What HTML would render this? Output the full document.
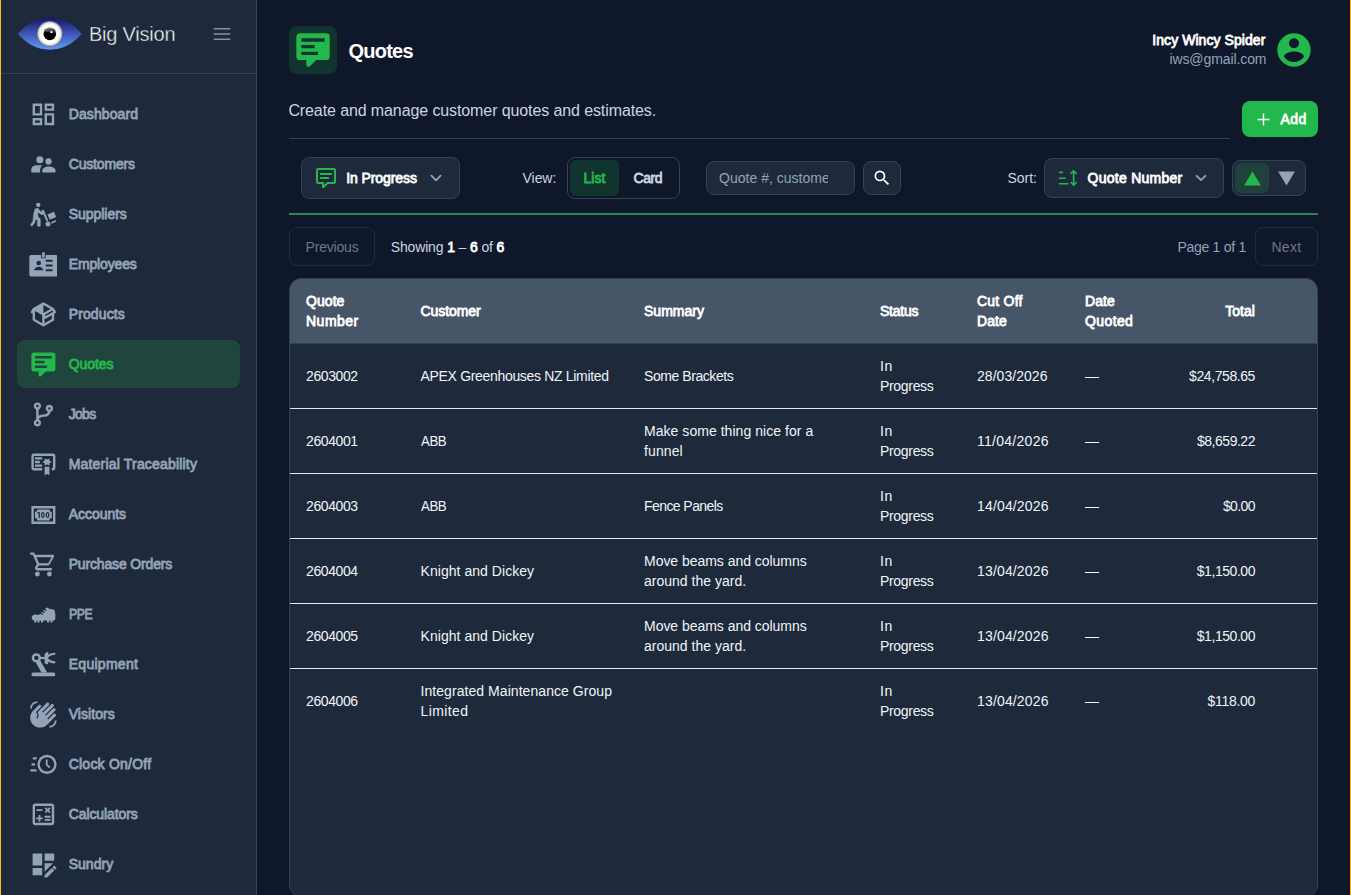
<!DOCTYPE html>
<html lang="en">
<head>
<meta charset="utf-8">
<title>Quotes - Big Vision</title>
<style>
*{box-sizing:border-box}
html,body{margin:0;padding:0}
body{width:1351px;height:895px;overflow:hidden;background:#0f172a;color:#f1f5f9;font-family:"Liberation Sans",sans-serif;font-size:14px;line-height:20px;position:relative}
.edge{position:absolute;top:0;width:1px;height:895px;background:#fbbd0e;z-index:9}
.ic{display:block;flex:none}
span{white-space:pre}
aside{position:absolute;left:1px;top:0;width:256px;height:895px;background:#1e293b;border-right:1px solid #334155}
.brand{position:absolute;left:0;top:0;width:255px;height:74px;border-bottom:1px solid #334155}
.brand .logo{position:absolute;left:15.5px;top:17.1px}
.brand .name{position:absolute;left:88px;top:19.9px;font-size:20px;line-height:28px;color:#f8fafc;-webkit-text-stroke:.4px #1e293b}
.brand .burger{position:absolute;left:209px;top:22px;color:#8493aa}
nav{position:absolute;left:0;top:0;width:255px}
.nav-item{position:absolute;left:16px;width:223px;height:48px;border-radius:8px;color:#94a3b8;display:block;text-decoration:none}
.nav-item .ic{position:absolute;left:11.6px;top:9.6px}
.nav-label{position:absolute;left:51.7px;top:14px;line-height:20px}
.nav-item.active{background:#20453d;color:#23b84b}
main{position:absolute;left:257px;top:0;width:1093px;height:895px}
.abs{position:absolute}
.pagehead .iconbox{position:absolute;left:32px;top:26px;width:48px;height:48px;border-radius:8px;background:#12342f;color:#23b84b;display:flex;align-items:center;justify-content:center}
h1{position:absolute;left:91.4px;top:37px;margin:0;font-size:20px;line-height:28px;font-weight:bold;color:#fff}
.user{position:absolute;right:83.6px;top:30.3px;text-align:right}
.user .nm{display:block;color:#fff;line-height:20px;height:19.2px;position:relative;left:-1px}
.user .em{display:block;color:#94a3b8;line-height:20px}
.avatar{position:absolute;left:1017px;top:30px;color:#23b84b}
.sub{position:absolute;left:31.4px;top:98.6px;margin:0;font-size:16px;line-height:24px;color:#cbd5e1}
.hr{position:absolute;left:32px;top:138px;width:941px;height:1px;background:#334155}
.addbtn{position:absolute;left:985px;top:101px;width:76px;height:36px;border-radius:8px;background:#23b84b;color:#fff;font-weight:bold;border:0;padding:0;font:inherit}
.addbtn svg{position:absolute;left:14.5px;top:11.5px}
.addbtn span{position:absolute;left:38.4px;top:7.7px;line-height:20px}
.box{position:absolute;border:1px solid #334155;border-radius:8px;background:#1e293b}
.lbl{position:absolute;color:#cbd5e1;line-height:20px}
.b{font-weight:normal}
.showing b{color:#fff;font-weight:normal;-webkit-text-stroke:.8px}
.greenline{position:absolute;left:32px;top:213px;width:1029px;height:2px;background:#2e8553}
.pill{position:absolute;border-radius:6px}
.pgbtn{position:absolute;border:1px solid #212c40;border-radius:8px;color:#6e7788;background:transparent;height:39px;top:227px;line-height:20px}
.pgbtn > span{position:absolute;top:8.6px}
.card{position:absolute;left:32px;top:278px;width:1029px;height:619px;border:1px solid #334155;border-radius:12px;background:#1e293b;overflow:hidden}
table{border-collapse:separate;border-spacing:0;table-layout:fixed;width:1027px}
th,td{padding:0 0 0 16px;text-align:left;vertical-align:middle;line-height:20px;font-weight:normal}
th{height:65px;background:#475569;color:#fff;border-bottom:1px solid #334155}
td{height:65px;border-top:1px solid #e5e7eb;color:#f1f5f9}
tbody tr:first-child td{height:64px;border-top:0}
th.r,td.r{text-align:right;padding:0 16px 0 0}
</style>
</head>
<body>
<div class="edge" style="left:0"></div><div class="edge" style="left:1350px"></div>
<aside>
  <div class="brand">
    <svg class="logo" width="65.6" height="33.7" viewBox="0 0 66 34" preserveAspectRatio="none" aria-hidden="true">
      <defs>
        <linearGradient id="lid" x1="0" y1="0" x2="0" y2="1"><stop offset="0" stop-color="#17176e"/><stop offset=".45" stop-color="#3b4fb0"/><stop offset="1" stop-color="#5f9bf5"/></linearGradient>
        <radialGradient id="ball" cx=".5" cy=".5" r=".5"><stop offset="0" stop-color="#fff"/><stop offset=".72" stop-color="#fff"/><stop offset=".88" stop-color="#dcdcdc"/><stop offset="1" stop-color="#6a6a6a"/></radialGradient>
        <linearGradient id="glare" x1="0" y1="0" x2="0.25" y2="1"><stop offset="0" stop-color="#fff" stop-opacity=".62"/><stop offset=".55" stop-color="#fff" stop-opacity=".28"/><stop offset="1" stop-color="#fff" stop-opacity=".05"/></linearGradient>
        <radialGradient id="pup" cx=".62" cy=".32" r=".6"><stop offset="0" stop-color="#6b6b6b"/><stop offset=".35" stop-color="#111"/><stop offset="1" stop-color="#000"/></radialGradient>
      </defs>
      <path d="M1 17C10 6 21 1 33 1S56 6 65 17C56 28 45 33 33 33S10 28 1 17Z" fill="url(#lid)"/>
      <circle cx="33" cy="17" r="12.9" fill="url(#ball)"/>
      <circle cx="33" cy="17" r="6.4" fill="#000"/>
      <path d="M27 15A6.1 6.1 0 0 1 39.1 17.9Q33.5 14.6 27 15Z" fill="url(#glare)"/>
      <circle cx="34.7" cy="15.3" r="1.15" fill="#fff"/>
    </svg>
    <span class="name" style="font-size:20px;letter-spacing:-0.228px">Big Vision</span>
    <svg class="burger ic" width="24" height="24" viewBox="0 0 24 24" fill="none" stroke="currentColor" stroke-width="1.5" aria-hidden="true"><path d="M3.75 6.75h16.5M3.75 12h16.5M3.75 17.25h16.5"/></svg>
  </div>
  <nav>
<a class="nav-item" style="top:90px"><svg class="ic" width="28.8" height="28.8" viewBox="0 0 24 24" fill="currentColor"  aria-hidden="true"><path d="M19,5V7H15V5H19M9,5V11H5V5H9M19,13V19H15V13H19M9,17V19H5V17H9M21,3H13V9H21V3M11,3H3V13H11V3M21,11H13V21H21V11M11,15H3V21H11V15Z"/></svg><span class="nav-label" style="font-size:14px;-webkit-text-stroke:.8px;letter-spacing:0.100px">Dashboard</span></a>
<a class="nav-item" style="top:140px"><svg class="ic" width="28.8" height="28.8" viewBox="0 0 28.8 28.8" fill="currentColor"  aria-hidden="true"><circle cx="10.83" cy="9.79" r="3.58"/><circle cx="19.55" cy="11.4" r="3.13"/><path d="M2.3 22.4V19.6C2.3 16.8 5 15.3 8.2 15.3H13.5C11.9 16.6 11.1 18.4 11.05 20.4V22.4Z"/><path d="M13.3 22.4V20.6C13.3 18 16 16.4 19.9 16.4S26.5 18 26.5 20.6V22.4Z"/></svg><span class="nav-label" style="font-size:14px;-webkit-text-stroke:.8px;letter-spacing:-0.160px">Customers</span></a>
<a class="nav-item" style="top:190px"><svg class="ic" width="28.8" height="28.8" viewBox="0 0 28.8 28.8" fill="currentColor"  aria-hidden="true"><circle cx="9.27" cy="4.87" r="2.2"/><path d="M6.14 8.81 L9.04 8.36 L10.61 10.6 L8.82 13.28 L9.04 16.85 L11.28 18.64 L11.28 26.24 L8.6 26.24 L8.37 20.43 L6.81 18.64 L5.69 22.66 L3.01 26.24 L1.44 24.9 L3.9 21.32 L4.57 14.17Z" stroke="currentColor" stroke-width="0.5" stroke-linejoin="round"/><path d="M9.04 11.04L13.06 13.72" stroke="currentColor" stroke-width="2.5" stroke-linecap="round" fill="none"/><path d="M13.06 13.72L13.74 10.82" stroke="currentColor" stroke-width="2.3" stroke-linecap="round" fill="none"/><path d="M14.05 10.82L18.43 21.1" stroke="currentColor" stroke-width="2.0" stroke-linecap="butt" fill="none"/><circle cx="18.96" cy="24.0" r="2.5"/><path d="M18.43 14.62 L24.91 11.85 L27.23 17.08 L20.75 19.85Z"/><path d="M22.0 22.22 L26.47 19.98 L27.23 21.55 L22.76 23.65Z"/></svg><span class="nav-label" style="font-size:14px;-webkit-text-stroke:.8px;letter-spacing:-0.033px">Suppliers</span></a>
<a class="nav-item" style="top:240px"><svg class="ic" width="28.8" height="28.8" viewBox="0 0 28.8 28.8" fill="currentColor"  aria-hidden="true"><path fill-rule="evenodd" d="M1.9300000000000002 5.01H26.88A1.6 1.6 0 0 1 28.48 6.609999999999999V24.86A1.6 1.6 0 0 1 26.88 26.46H1.9300000000000002A1.6 1.6 0 0 1 0.33 24.86V6.609999999999999A1.6 1.6 0 0 1 1.9300000000000002 5.01ZM7.410000000000001 13.05a2.3 2.3 0 1 0 4.6 0a2.3 2.3 0 1 0 -4.6 0ZM5.11 20.2C5.71 15.44 13.72 15.44 14.32 20.2ZM16.73 9.82H23.57V11.82H16.73ZM16.73 14.42H23.57V16.42H16.73ZM16.73 19.2H23.57V21.2H16.73ZM12.17 4.91H16.64V8.36H12.17Z"/><rect x="13.06" y="2.33" width="2.69" height="5.14" rx="0.3"/></svg><span class="nav-label" style="font-size:14px;-webkit-text-stroke:.8px;letter-spacing:-0.144px">Employees</span></a>
<a class="nav-item" style="top:290px"><svg class="ic" width="28.8" height="28.8" viewBox="0 0 24 24" fill="currentColor"  aria-hidden="true"><path d="M2,10.96C1.5,10.68 1.35,10.07 1.63,9.59L3.13,7C3.24,6.8 3.41,6.66 3.6,6.58L11.43,2.18C11.59,2.06 11.79,2 12,2C12.21,2 12.41,2.06 12.57,2.18L20.47,6.62C20.66,6.72 20.82,6.88 20.91,7.08L22.36,9.6C22.64,10.08 22.47,10.69 22,10.96L21,11.54V16.5C21,16.88 20.79,17.21 20.47,17.38L12.57,21.82C12.41,21.94 12.21,22 12,22C11.79,22 11.59,21.94 11.43,21.82L3.53,17.38C3.21,17.21 3,16.88 3,16.5V10.96C2.7,11.13 2.32,11.14 2,10.96M12,4.15V4.15L12,10.85V10.85L17.96,7.5L12,4.15M5,15.91L11,19.29V12.58L5,9.21V15.91M19,15.91V12.69L14,15.59C13.67,15.77 13.3,15.76 13,15.6V19.29L19,15.91M13.85,13.36L20.13,9.73L19.55,8.72L13.27,12.35L13.85,13.36Z"/></svg><span class="nav-label" style="font-size:14px;-webkit-text-stroke:.8px;letter-spacing:0.122px">Products</span></a>
<a class="nav-item active" style="top:340px"><svg class="ic" width="28.8" height="28.8" viewBox="0 0 24 24" fill="currentColor"  aria-hidden="true"><path d="M9,22A1,1 0 0,1 8,21V18H4A2,2 0 0,1 2,16V4C2,2.89 2.9,2 4,2H20A2,2 0 0,1 22,4V16A2,2 0 0,1 20,18H13.9L10.2,21.71C10,21.9 9.75,22 9.5,22V22H9M5,5V7H19V5H5M5,9V11H13V9H5M5,13V15H15V13H5Z"/></svg><span class="nav-label" style="font-size:14px;-webkit-text-stroke:.8px;letter-spacing:-0.088px">Quotes</span></a>
<a class="nav-item" style="top:390px"><svg class="ic" width="28.8" height="28.8" viewBox="0 0 24 24" fill="currentColor"  aria-hidden="true"><path d="M13,14C9.64,14 8.54,15.35 8.18,16.24C9.25,16.7 10,17.76 10,19A3,3 0 0,1 7,22A3,3 0 0,1 4,19C4,17.69 4.83,16.58 6,16.17V7.83C4.83,7.42 4,6.31 4,5A3,3 0 0,1 7,2A3,3 0 0,1 10,5C10,6.31 9.17,7.42 8,7.83V13.12C8.88,12.47 10.16,12 12,12C14.67,12 15.56,10.66 15.85,9.77C14.77,9.32 14,8.25 14,7A3,3 0 0,1 17,4A3,3 0 0,1 20,7C20,8.34 19.12,9.5 17.91,9.86C17.65,11.29 16.68,14 13,14M7,18A1,1 0 0,0 6,19A1,1 0 0,0 7,20A1,1 0 0,0 8,19A1,1 0 0,0 7,18M7,4A1,1 0 0,0 6,5A1,1 0 0,0 7,6A1,1 0 0,0 8,5A1,1 0 0,0 7,4M17,6A1,1 0 0,0 16,7A1,1 0 0,0 17,8A1,1 0 0,0 18,7A1,1 0 0,0 17,6Z"/></svg><span class="nav-label" style="font-size:14px;-webkit-text-stroke:.8px;letter-spacing:-0.691px">Jobs</span></a>
<a class="nav-item" style="top:440px"><svg class="ic" width="28.8" height="28.8" viewBox="0 0 24 24" fill="currentColor"  aria-hidden="true"><path d="M13 21L15 20L17 21V14H13M17 9V7L15 8L13 7V9L11 10L13 11V13L15 12L17 13V11L19 10M20 3H4A2 2 0 0 0 2 5V15A2 2 0 0 0 4 17H11V15H4V5H20V15H19V17H20A2 2 0 0 0 22 15V5A2 2 0 0 0 20 3M11 8H5V6H11M9 11H5V9H9M11 14H5V12H11Z"/></svg><span class="nav-label" style="font-size:14px;-webkit-text-stroke:.8px;letter-spacing:0.188px">Material Traceability</span></a>
<a class="nav-item" style="top:490px"><svg class="ic" width="28.8" height="28.8" viewBox="0 0 24 24" fill="currentColor"  aria-hidden="true"><path d="M2,5H22V20H2V5M20,18V7H4V18H20M17,8A2,2 0 0,0 19,10V15A2,2 0 0,0 17,17H7A2,2 0 0,0 5,15V10A2,2 0 0,0 7,8H17M17,13V12C17,10.9 16.33,10 15.5,10C14.67,10 14,10.9 14,12V13C14,14.1 14.67,15 15.5,15C16.33,15 17,14.1 17,13M15.5,11A0.5,0.5 0 0,1 16,11.5V13.5A0.5,0.5 0 0,1 15.5,14A0.5,0.5 0 0,1 15,13.5V11.5A0.5,0.5 0 0,1 15.5,11M13,13V12C13,10.9 12.33,10 11.5,10C10.67,10 10,10.9 10,12V13C10,14.1 10.67,15 11.5,15C12.33,15 13,14.1 13,13M11.5,11A0.5,0.5 0 0,1 12,11.5V13.5A0.5,0.5 0 0,1 11.5,14A0.5,0.5 0 0,1 11,13.5V11.5A0.5,0.5 0 0,1 11.5,11M8,15H9V10H8L7,10.5V11.5L8,11V15Z"/></svg><span class="nav-label" style="font-size:14px;-webkit-text-stroke:.8px;letter-spacing:-0.041px">Accounts</span></a>
<a class="nav-item" style="top:540px"><svg class="ic" width="28.8" height="28.8" viewBox="0 0 24 24" fill="currentColor"  aria-hidden="true"><path d="M17,18A2,2 0 0,1 19,20A2,2 0 0,1 17,22C15.89,22 15,21.1 15,20C15,18.89 15.89,18 17,18M1,2H4.27L5.21,4H20A1,1 0 0,1 21,5C21,5.17 20.95,5.34 20.88,5.5L17.3,11.97C16.96,12.58 16.3,13 15.55,13H8.1L7.2,14.63L7.17,14.75A0.25,0.25 0 0,0 7.42,15H19V17H7C5.89,17 5,16.1 5,15C5,14.65 5.09,14.32 5.24,14.04L6.6,11.59L3,4H1V2M7,18A2,2 0 0,1 9,20A2,2 0 0,1 7,22C5.89,22 5,21.1 5,20C5,18.89 5.89,18 7,18M16,11L18.78,6H6.14L8.5,11H16Z"/></svg><span class="nav-label" style="font-size:14px;-webkit-text-stroke:.8px;letter-spacing:-0.159px">Purchase Orders</span></a>
<a class="nav-item" style="top:590px"><svg class="ic" width="28.8" height="28.8" viewBox="0 0 28.8 28.8" fill="currentColor"  aria-hidden="true"><path d="M18.2 7.47 L20.22 8.81 L25.36 9.7 L26.38 14.17 L26.25 19.53 L24.68 20.65 L23.7 20.52 L23.34 22.44 L21.56 22.44 L21.2 20.52 L20.35 20.52 L19.99 22.44 L18.2 22.44 L17.85 20.52 L14.32 20.52 L13.96 22.44 L12.17 22.44 L11.81 20.52 L10.74 20.52 L10.38 22.44 L8.6 22.44 L8.24 20.52 L7.61 20.52 L7.25 22.44 L5.47 22.44 L5.11 20.52 L4.13 20.2 Q2.34 18.64 2.79 16.41 Q3.46 14.39 6.81 14.53 L9.94 15.06 L11.05 13.5 L13.29 15.06 L14.05 13.95 L12.17 12.61 L13.06 11.71 L15.3 13.28 L15.97 12.29 L14.05 10.73 L14.85 9.84 L17.09 11.27 L17.53 10.37 L15.97 8.81Z"/></svg><span class="nav-label" style="font-size:14px;-webkit-text-stroke:.8px;letter-spacing:-0.5px;display:inline-block;transform:scaleX(0.8802);transform-origin:0 50%">PPE</span></a>
<a class="nav-item" style="top:640px"><svg class="ic" width="28.8" height="28.8" viewBox="0 0 28.8 28.8" fill="currentColor"  aria-hidden="true"><circle cx="7.34" cy="7.91" r="3.4" fill="none" stroke="currentColor" stroke-width="2.5"/><path d="M6.81 12.61 L11.05 10.15 L18.2 22.44 L12.39 22.44Z"/><rect x="2.56" y="22.44" width="23.69" height="3.8" rx="1.6"/><path d="M11.28 8.0L16.19 8.0" stroke="currentColor" stroke-width="2.2" stroke-linecap="butt" fill="none"/><path d="M15.61 3.67 L18.87 1.66 L19.32 2.55 L19.23 13.72 L17.53 14.39 L15.61 13.05Z"/><path d="M18.87 6.57Q21.11 3.89 26.25 3.76" stroke="currentColor" stroke-width="2.2" fill="none"/><path d="M18.87 9.48Q21.11 12.29 26.25 12.38" stroke="currentColor" stroke-width="2.2" fill="none"/></svg><span class="nav-label" style="font-size:14px;-webkit-text-stroke:.8px;letter-spacing:0.282px">Equipment</span></a>
<a class="nav-item" style="top:690px"><svg class="ic" width="28.8" height="28.8" viewBox="0 0 24 24" fill="currentColor"  aria-hidden="true"><path d="M23 17C23 20.31 20.31 23 17 23V21.5C19.5 21.5 21.5 19.5 21.5 17H23M1 7C1 3.69 3.69 1 7 1V2.5C4.5 2.5 2.5 4.5 2.5 7H1M8 4.32L3.41 8.92C.19 12.14 .19 17.37 3.41 20.59S11.86 23.81 15.08 20.59L22.15 13.5C22.64 13.03 22.64 12.24 22.15 11.75C21.66 11.26 20.87 11.26 20.38 11.75L15.96 16.17L15.25 15.46L21.79 8.92C22.28 8.43 22.28 7.64 21.79 7.15S20.5 6.66 20 7.15L14.19 13L13.5 12.27L20.37 5.38C20.86 4.9 20.86 4.1 20.37 3.62S19.09 3.13 18.6 3.62L11.73 10.5L11 9.8L16.5 4.32C17 3.83 17 3.04 16.5 2.55S15.22 2.06 14.73 2.55L7.11 10.17C8.33 11.74 8.22 14 6.78 15.45L6.07 14.74C7.24 13.57 7.24 11.67 6.07 10.5L5.72 10.15L9.79 6.08C10.28 5.59 10.28 4.8 9.79 4.31C9.29 3.83 8.5 3.83 8 4.32Z"/></svg><span class="nav-label" style="font-size:14px;-webkit-text-stroke:.8px;letter-spacing:0.065px">Visitors</span></a>
<a class="nav-item" style="top:740px"><svg class="ic" width="28.8" height="28.8" viewBox="0 0 24 24" fill="currentColor"  aria-hidden="true"><path d="M15,4A8,8 0 0,1 23,12A8,8 0 0,1 15,20A8,8 0 0,1 7,12A8,8 0 0,1 15,4M15,6A6,6 0 0,0 9,12A6,6 0 0,0 15,18A6,6 0 0,0 21,12A6,6 0 0,0 15,6M14,8H15.5V11.78L17.83,14.11L16.77,15.17L14,12.4V8M2,18A1,1 0 0,1 1,17A1,1 0 0,1 2,16H5.83C6.14,16.71 6.54,17.38 7,18H2M3,13A1,1 0 0,1 2,12A1,1 0 0,1 3,11H5.05L5,12L5.05,13H3M4,8A1,1 0 0,1 3,7A1,1 0 0,1 4,6H7C6.54,6.62 6.14,7.29 5.83,8H4Z"/></svg><span class="nav-label" style="font-size:14px;-webkit-text-stroke:.8px;letter-spacing:0.228px">Clock On/Off</span></a>
<a class="nav-item" style="top:790px"><svg class="ic" width="28.8" height="28.8" viewBox="0 0 24 24" fill="currentColor"  aria-hidden="true"><path d="M19 3H5C3.9 3 3 3.9 3 5V19C3 20.1 3.9 21 5 21H19C20.1 21 21 20.1 21 19V5C21 3.9 20.1 3 19 3M19 19H5V5H19V19M6.2 7.7H11.2V9.2H6.2V7.7M13 15.8H18V17.3H13V15.8M13 13.2H18V14.7H13V13.2M8 18H9.5V16H11.5V14.5H9.5V12.5H8V14.5H6V16H8V18M14.1 10.9L15.5 9.5L16.9 10.9L18 9.9L16.6 8.5L18 7.1L16.9 6L15.5 7.4L14.1 6L13 7.1L14.4 8.5L13 9.9L14.1 10.9Z"/></svg><span class="nav-label" style="font-size:14px;-webkit-text-stroke:.8px;letter-spacing:-0.093px">Calculators</span></a>
<a class="nav-item" style="top:840px"><svg class="ic" width="28.8" height="28.8" viewBox="0 0 24 24" fill="currentColor"  aria-hidden="true"><path d="M21 13.1C20.9 13.1 20.7 13.2 20.6 13.3L19.6 14.3L21.7 16.4L22.7 15.4C22.9 15.2 22.9 14.8 22.7 14.6L21.4 13.3C21.3 13.2 21.2 13.1 21 13.1M19.1 14.9L13 20.9V23H15.1L21.2 16.9L19.1 14.9M21 3H13V9H21V3M11 21V15H3V21H11M11 13V3H3V13H11M13 11V18.1L20.1 11H13Z"/></svg><span class="nav-label" style="font-size:14px;-webkit-text-stroke:.8px;letter-spacing:0.028px">Sundry</span></a>

  </nav>
</aside>
<main>
  <header class="pagehead">
    <div class="iconbox"><svg class="ic" width="40" height="40" viewBox="0 0 24 24" fill="currentColor"  aria-hidden="true"><path d="M9,22A1,1 0 0,1 8,21V18H4A2,2 0 0,1 2,16V4C2,2.89 2.9,2 4,2H20A2,2 0 0,1 22,4V16A2,2 0 0,1 20,18H13.9L10.2,21.71C10,21.9 9.75,22 9.5,22V22H9M5,5V7H19V5H5M5,9V11H13V9H5M5,13V15H15V13H5Z"/></svg></div>
    <h1><span style="font-size:20px;font-weight:bold;letter-spacing:-0.735px">Quotes</span></h1>
    <div class="user"><span class="nm" style="font-size:14px;-webkit-text-stroke:.8px;letter-spacing:0.064px">Incy Wincy Spider</span><span class="em" style="font-size:14px;letter-spacing:-0.097px">iws@gmail.com</span></div>
    <div class="avatar"><svg class="ic" width="40" height="40" viewBox="0 0 24 24" fill="currentColor"  aria-hidden="true"><path d="M12,19.2C9.5,19.2 7.29,17.92 6,16C6.03,14 10,12.9 12,12.9C14,12.9 17.97,14 18,16C16.71,17.92 14.5,19.2 12,19.2M12,5A3,3 0 0,1 15,8A3,3 0 0,1 12,11A3,3 0 0,1 9,8A3,3 0 0,1 12,5M12,2A10,10 0 0,0 2,12A10,10 0 0,0 12,22A10,10 0 0,0 22,12C22,6.47 17.5,2 12,2Z"/></svg></div>
    <p class="sub"><span style="font-size:16px;letter-spacing:-0.104px">Create and manage customer quotes and estimates.</span></p>
    <button class="addbtn"><svg class="ic" width="13" height="13" viewBox="0 0 13 13" fill="none" stroke="#fff" stroke-width="1.4" aria-hidden="true"><path d="M6.5 0.5v12M0.5 6.5h12"/></svg><span style="font-size:14px;-webkit-text-stroke:.8px;letter-spacing:0.500px">Add</span></button>
    <div class="hr"></div>
  </header>

  <section class="toolbar">
    <div class="box" style="left:44px;top:157px;width:159px;height:42px">
      <div class="abs" style="left:12px;top:8px;color:#23b84b"><svg class="ic" width="24" height="24" viewBox="0 0 24 24" fill="currentColor"  aria-hidden="true"><path d="M9,22A1,1 0 0,1 8,21V18H4A2,2 0 0,1 2,16V4C2,2.89 2.9,2 4,2H20A2,2 0 0,1 22,4V16A2,2 0 0,1 20,18H13.9L10.2,21.71C10,21.9 9.75,22 9.5,22V22H9M10,16V19.08L13.08,16H20V4H4V16H10M6,7H18V9H6V7M6,11H15V13H6V11Z"/></svg></div>
      <div class="abs b" style="left:44.2px;top:10px;color:#fff"><span style="font-size:14px;-webkit-text-stroke:.8px;letter-spacing:-0.079px">In Progress</span></div>
      <svg class="ic abs" style="left:126.2px;top:12.2px" width="16" height="16" viewBox="0 0 16 16" fill="none" stroke="#94a3b8" stroke-width="1.8" stroke-linecap="round" stroke-linejoin="round" aria-hidden="true"><path d="M3.4 5.7l4.6 4.6 4.6-4.6"/></svg>
    </div>
    <div class="lbl" style="left:265.6px;top:168.3px"><span style="font-size:14px;letter-spacing:-0.073px">View:</span></div>
    <div class="box" style="left:310px;top:157px;width:113px;height:42px;background:transparent">
      <div class="pill" style="left:2px;top:2px;width:49px;height:36px;background:#12342f"></div>
      <div class="abs b" style="left:15.5px;top:10px;color:#23b84b"><span style="font-size:14px;-webkit-text-stroke:.8px;letter-spacing:0.001px">List</span></div>
      <div class="abs b" style="left:65.6px;top:10px;color:#cbd5e1"><span style="font-size:14px;-webkit-text-stroke:.8px;letter-spacing:-0.453px">Card</span></div>
    </div>
    <div class="box" style="left:449px;top:161px;width:149px;height:34px">
      <div class="abs" style="left:12px;top:6px;width:109.3px;overflow:hidden;color:#94a3b8"><span style="font-size:14px;letter-spacing:0.019px">Quote #, customer, summary</span></div>
    </div>
    <div class="box" style="left:606px;top:161px;width:38px;height:34px;color:#fff"><div class="abs" style="left:8px;top:6px"><svg class="ic" width="20" height="20" viewBox="0 0 24 24" fill="currentColor"  aria-hidden="true"><path d="M9.5,3A6.5,6.5 0 0,1 16,9.5C16,11.11 15.41,12.59 14.44,13.73L14.71,14H15.5L20.5,19L19,20.5L14,15.5V14.71L13.73,14.44C12.59,15.41 11.11,16 9.5,16A6.5,6.5 0 0,1 3,9.5A6.5,6.5 0 0,1 9.5,3M9.5,5C7,5 5,7 5,9.5C5,12 7,14 9.5,14C12,14 14,12 14,9.5C14,7 12,5 9.5,5Z"/></svg></div></div>
    <div class="lbl" style="left:750.5px;top:168.1px"><span style="font-size:14px;letter-spacing:-0.044px">Sort:</span></div>
    <div class="box" style="left:787px;top:158px;width:180px;height:40px">
      <svg class="ic abs" style="left:12px;top:7px" width="24" height="24" viewBox="0 0 24 24" fill="none" stroke="#23b84b" stroke-width="1.6" stroke-linecap="round" stroke-linejoin="round" aria-hidden="true"><path d="M2.6 6.4h2.9M2.6 12.3h5.6M2.6 17.7h8.3M16.6 5v14M14 7.5l2.6-2.6 2.6 2.6M14 16.5l2.6 2.6 2.6-2.6"/></svg>
      <div class="abs b" style="left:42.6px;top:9px;color:#fff"><span style="font-size:14px;-webkit-text-stroke:.8px;letter-spacing:0.258px">Quote Number</span></div>
      <svg class="ic abs" style="left:148.2px;top:11.1px" width="16" height="16" viewBox="0 0 16 16" fill="none" stroke="#94a3b8" stroke-width="1.8" stroke-linecap="round" stroke-linejoin="round" aria-hidden="true"><path d="M3.6 5.8l4.4 4.4 4.4-4.4"/></svg>
    </div>
    <div class="box" style="left:975px;top:160px;width:74px;height:36px">
      <div class="pill" style="left:2px;top:2px;width:34px;height:30px;background:#1f423d"></div>
      <svg class="ic abs" style="left:10.6px;top:9.8px" width="17" height="15" viewBox="0 0 17 15" aria-hidden="true"><path d="M8.5 0.4L16.9 14.6H0.1Z" fill="#23b84b"/></svg>
      <svg class="ic abs" style="left:44.6px;top:9.8px" width="17" height="15" viewBox="0 0 17 15" aria-hidden="true"><path d="M8.5 14.6L16.9 0.4H0.1Z" fill="#94a3b8"/></svg>
    </div>
    <div class="greenline"></div>
  </section>

  <section class="pager">
    <div class="pgbtn" style="left:32px;width:86px"><span style="left:15.6px"><span style="font-size:14px;letter-spacing:-0.196px">Previous</span></span></div>
    <div class="lbl showing" style="left:133.7px;top:237px"><span style="font-size:14px;letter-spacing:-0.140px">Showing <b>1</b> – <b>6</b> of <b>6</b></span></div>
    <div class="lbl" style="left:920.5px;top:237px;color:#94a3b8"><span style="font-size:14px;letter-spacing:-0.293px">Page 1 of 1</span></div>
    <div class="pgbtn" style="left:998px;width:63px"><span style="left:15.4px"><span style="font-size:14px;letter-spacing:0.335px">Next</span></span></div>
  </section>

  <section class="card">
    <table>
      <colgroup><col style="width:114.5px"><col style="width:223.5px"><col style="width:236px"><col style="width:97px"><col style="width:108px"><col style="width:80px"><col style="width:122px"><col style="width:46px"></colgroup>
      <thead><tr><th><span style="font-size:14px;-webkit-text-stroke:.8px;letter-spacing:0.062px">Quote</span><br><span style="font-size:14px;-webkit-text-stroke:.8px;letter-spacing:0.494px">Number</span></th><th><span style="font-size:14px;-webkit-text-stroke:.8px;letter-spacing:-0.089px">Customer</span></th><th><span style="font-size:14px;-webkit-text-stroke:.8px;letter-spacing:0.001px">Summary</span></th><th><span style="font-size:14px;-webkit-text-stroke:.8px;letter-spacing:-0.238px">Status</span></th><th><span style="font-size:14px;-webkit-text-stroke:.8px;letter-spacing:0.233px">Cut Off</span><br><span style="font-size:14px;-webkit-text-stroke:.8px;letter-spacing:0.071px">Date</span></th><th><span style="font-size:14px;-webkit-text-stroke:.8px;letter-spacing:0.038px">Date</span><br><span style="font-size:14px;-webkit-text-stroke:.8px;letter-spacing:0.392px">Quoted</span></th><th class="r"><span style="font-size:14px;-webkit-text-stroke:.8px;letter-spacing:0.060px">Total</span></th><th></th></tr></thead>
      <tbody>
<tr><td><span style="font-size:14px;letter-spacing:-0.403px">2603002</span></td><td><span style="font-size:14px;letter-spacing:-0.319px">APEX Greenhouses NZ Limited</span></td><td><span style="font-size:14px;letter-spacing:-0.435px">Some Brackets</span></td><td><span style="font-size:14px;letter-spacing:0.500px">In</span><br><span style="font-size:14px;letter-spacing:-0.317px">Progress</span></td><td><span style="font-size:14px;letter-spacing:0.046px">28/03/2026</span></td><td><span style="font-size:14px">—</span></td><td class="r"><span style="font-size:14px;letter-spacing:-0.409px">$24,758.65</span></td><td></td></tr>
<tr><td><span style="font-size:14px;letter-spacing:-0.403px">2604001</span></td><td><span style="font-size:14px;letter-spacing:-0.5px;display:inline-block;transform:scaleX(0.9484);transform-origin:0 50%">ABB</span></td><td><span style="font-size:14px;letter-spacing:0.044px">Make some thing nice for a</span><br><span style="font-size:14px;letter-spacing:0.113px">funnel</span></td><td><span style="font-size:14px;letter-spacing:0.500px">In</span><br><span style="font-size:14px;letter-spacing:-0.317px">Progress</span></td><td><span style="font-size:14px;letter-spacing:0.273px">11/04/2026</span></td><td><span style="font-size:14px">—</span></td><td class="r"><span style="font-size:14px;letter-spacing:-0.475px">$8,659.22</span></td><td></td></tr>
<tr><td><span style="font-size:14px;letter-spacing:-0.403px">2604003</span></td><td><span style="font-size:14px;letter-spacing:-0.5px;display:inline-block;transform:scaleX(0.9484);transform-origin:0 50%">ABB</span></td><td><span style="font-size:14px;letter-spacing:-0.573px">Fence Panels</span></td><td><span style="font-size:14px;letter-spacing:0.500px">In</span><br><span style="font-size:14px;letter-spacing:-0.317px">Progress</span></td><td><span style="font-size:14px;letter-spacing:0.158px">14/04/2026</span></td><td><span style="font-size:14px">—</span></td><td class="r"><span style="font-size:14px;letter-spacing:-0.587px">$0.00</span></td><td></td></tr>
<tr><td><span style="font-size:14px;letter-spacing:-0.403px">2604004</span></td><td><span style="font-size:14px;letter-spacing:0.047px">Knight and Dickey</span></td><td><span style="font-size:14px;letter-spacing:-0.034px">Move beams and columns</span><br><span style="font-size:14px;letter-spacing:0.009px">around the yard.</span></td><td><span style="font-size:14px;letter-spacing:0.500px">In</span><br><span style="font-size:14px;letter-spacing:-0.317px">Progress</span></td><td><span style="font-size:14px;letter-spacing:0.158px">13/04/2026</span></td><td><span style="font-size:14px">—</span></td><td class="r"><span style="font-size:14px;letter-spacing:-0.450px">$1,150.00</span></td><td></td></tr>
<tr><td><span style="font-size:14px;letter-spacing:-0.403px">2604005</span></td><td><span style="font-size:14px;letter-spacing:0.047px">Knight and Dickey</span></td><td><span style="font-size:14px;letter-spacing:-0.034px">Move beams and columns</span><br><span style="font-size:14px;letter-spacing:0.009px">around the yard.</span></td><td><span style="font-size:14px;letter-spacing:0.500px">In</span><br><span style="font-size:14px;letter-spacing:-0.317px">Progress</span></td><td><span style="font-size:14px;letter-spacing:0.158px">13/04/2026</span></td><td><span style="font-size:14px">—</span></td><td class="r"><span style="font-size:14px;letter-spacing:-0.450px">$1,150.00</span></td><td></td></tr>
<tr><td><span style="font-size:14px;letter-spacing:-0.403px">2604006</span></td><td><span style="font-size:14px;letter-spacing:0.059px">Integrated Maintenance Group</span><br><span style="font-size:14px;letter-spacing:0.409px">Limited</span></td><td></td><td><span style="font-size:14px;letter-spacing:0.500px">In</span><br><span style="font-size:14px;letter-spacing:-0.317px">Progress</span></td><td><span style="font-size:14px;letter-spacing:0.158px">13/04/2026</span></td><td><span style="font-size:14px">—</span></td><td class="r"><span style="font-size:14px;letter-spacing:-0.297px">$118.00</span></td><td></td></tr>

      </tbody>
    </table>
  </section>
</main>
</body>
</html>
